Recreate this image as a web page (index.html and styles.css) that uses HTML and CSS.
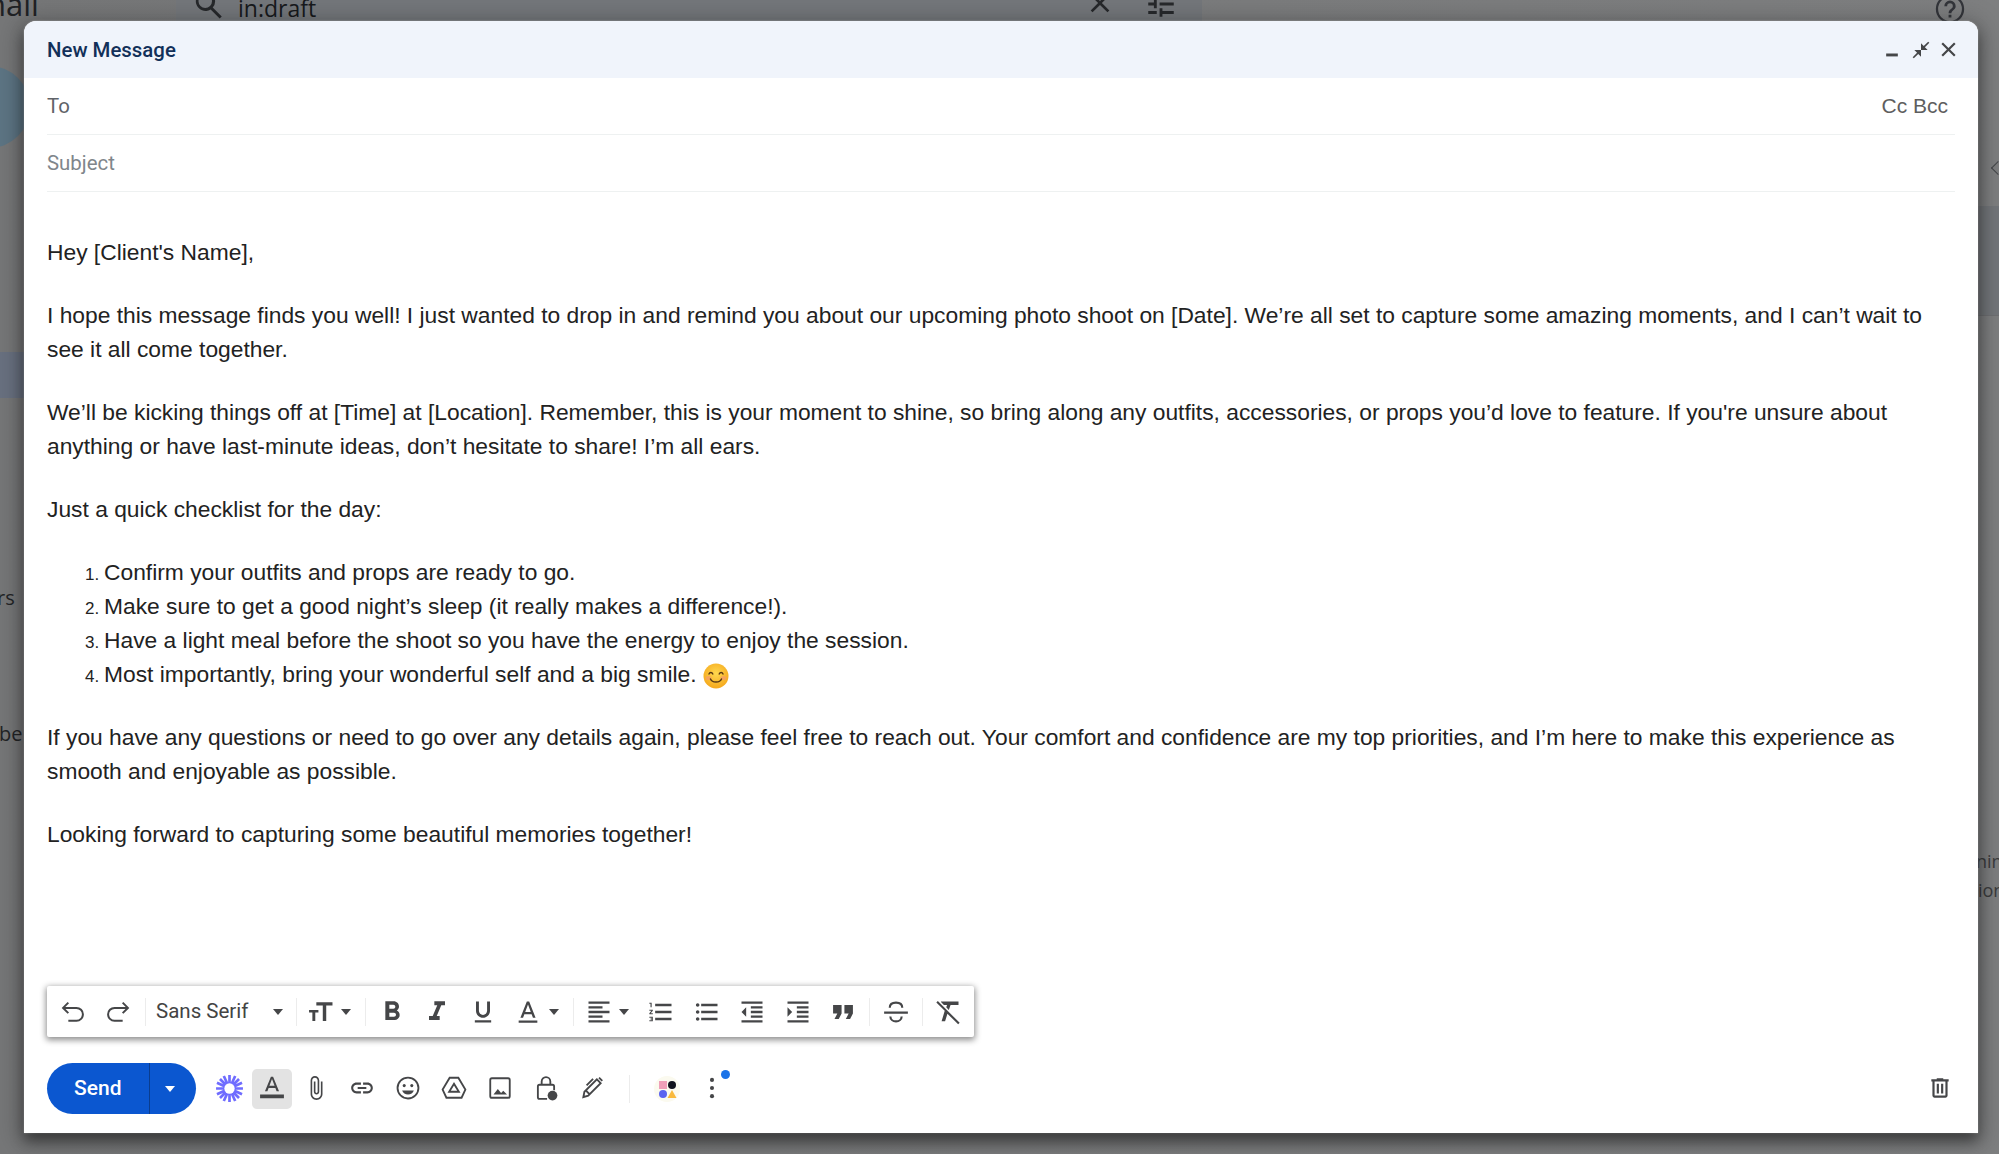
FILE: index.html
```html
<!DOCTYPE html>
<html lang="en">
<head>
<meta charset="utf-8">
<title>New Message</title>
<link rel="stylesheet" href="styles.css">
</head>
<body>
<div class="backdrop">
  <span class="bg-brand">nail</span>
  <div class="bg-search">
    <svg class="bg-search-icon" viewBox="0 0 24 24"><path d="M9.5 3a6.5 6.5 0 0 1 5 10.65l6 6-1.4 1.4-6-6A6.5 6.5 0 1 1 9.5 3zm0 2a4.5 4.5 0 1 0 0 9 4.5 4.5 0 0 0 0-9z"/></svg>
    <span class="bg-query">in:draft</span>
    <svg class="bg-x" viewBox="0 0 24 24"><path d="M19 6.41L17.59 5 12 10.59 6.41 5 5 6.41 10.59 12 5 17.59 6.41 19 12 13.41 17.59 19 19 17.59 13.41 12z"/></svg>
    <svg class="bg-tune" viewBox="0 0 24 24"><path d="M3 17v2h6v-2H3zM3 5v2h10V5H3zm10 16v-2h8v-2h-8v-2h-2v6h2zM7 9v2H3v2h4v2h2V9H7zm14 4v-2H11v2h10zm-6-4h2V7h4V5h-4V3h-2v6z"/></svg>
  </div>
  <svg class="bg-help" viewBox="0 0 24 24"><path d="M12 2a10 10 0 1 0 0 20 10 10 0 0 0 0-20zm0 18.4a8.4 8.4 0 1 1 0-16.8 8.4 8.4 0 0 1 0 16.8zM11 16h2v2h-2zm1-10a4 4 0 0 0-4 4h2a2 2 0 1 1 4 0c0 2-3 1.75-3 5h2c0-2.25 3-2.5 3-5a4 4 0 0 0-4-4z"/></svg>
  <div class="bg-compose"></div>
  <div class="bg-row-left"></div>
  <span class="bg-word bg-rs">rs</span>
  <span class="bg-word bg-be">be</span>
  <div class="bg-row-right"></div>
  <div class="bg-chevron"></div>
  <span class="bg-word bg-nin">nin</span>
  <span class="bg-word bg-ion">ion</span>
</div>

<main class="compose">
  <header class="compose-head">
    <h1 class="compose-title">New Message</h1>
    <div class="head-actions">
      <svg class="ico head-min" viewBox="0 0 24 24"><path d="M2 18h20v5H2z"/></svg>
      <svg class="ico head-full" viewBox="0 0 24 24"><path d="M22 3.41l-5.29 5.29L20 12h-8V4l3.29 3.29L20.59 2 22 3.41zM3.41 22l5.29-5.29L12 20v-8H4l3.29 3.29L2 20.59 3.41 22z"/></svg>
      <svg class="ico head-close" viewBox="0 0 24 24"><path d="M22 4.2L19.8 2 12 9.8 4.2 2 2 4.2 9.8 12 2 19.800 4.200 22 12 14.200 19.800 22 22 19.800 14.200 12z"/></svg>
    </div>
  </header>

  <div class="field">
    <span class="field-to">To</span>
    <span class="field-cc">Cc Bcc</span>
  </div>
  <div class="field">
    <span class="field-subject">Subject</span>
  </div>

  <article class="message">
    <p>Hey [Client's Name],</p>
    <p>I hope this message finds you well! I just wanted to drop in and remind you about our upcoming photo shoot on [Date]. We’re all set to capture some amazing moments, and I can’t wait to see it all come together.</p>
    <p>We’ll be kicking things off at [Time] at [Location]. Remember, this is your moment to shine, so bring along any outfits, accessories, or props you’d love to feature. If you're unsure about anything or have last-minute ideas, don’t hesitate to share! I’m all ears.</p>
    <p>Just a quick checklist for the day:</p>
    <ol class="checklist">
      <li>Confirm your outfits and props are ready to go.</li>
      <li>Make sure to get a good night’s sleep (it really makes a difference!).</li>
      <li>Have a light meal before the shoot so you have the energy to enjoy the session.</li>
      <li>Most importantly, bring your wonderful self and a big smile. <svg class="emoji" viewBox="0 0 26 26"><defs><radialGradient id="face" cx="50%" cy="40%" r="60%"><stop offset="0" stop-color="#ffd84f"/><stop offset="1" stop-color="#f5a81c"/></radialGradient></defs><circle cx="13" cy="13" r="12.500" fill="url(#face)"/><ellipse cx="5.500" cy="15" rx="3" ry="2" fill="#f59a6e" opacity=".7"/><ellipse cx="20.500" cy="15" rx="3" ry="2" fill="#f59a6e" opacity=".7"/><path d="M6 11c.7-2 3-2 3.800 0M16.200 11c.8-2 3.100-2 3.800 0" fill="none" stroke="#5a3a14" stroke-width="1.400" stroke-linecap="round"/><path d="M7.500 16c1.500 4 9.500 4 11 0" fill="none" stroke="#5a3a14" stroke-width="1.400" stroke-linecap="round"/></svg></li>
    </ol>
    <p>If you have any questions or need to go over any details again, please feel free to reach out. Your comfort and confidence are my top priorities, and I’m here to make this experience as smooth and enjoyable as possible.</p>
    <p>Looking forward to capturing some beautiful memories together!</p>
  </article>

  <div class="format-bar">
    <button class="tb"><svg class="ico ico-line" viewBox="0 0 24 24"><path d="M8 4L3.500 8.500 8 13M3.500 8.500H15a5.500 5.500 0 0 1 0 11H8"/></svg></button>
    <button class="tb"><svg class="ico ico-line" viewBox="0 0 24 24"><path d="M16 4l4.500 4.500L16 13M20.500 8.500H9a5.500 5.500 0 0 0 0 11h7"/></svg></button>
    <span class="sep sep-first"></span>
    <button class="tb-font"><span>Sans Serif</span><i class="caret"></i></button>
    <span class="sep"></span>
    <button class="tb-size"><svg class="ico" viewBox="0 0 24 24"><path d="M1 10.500h9v2.500H7v8H4.200v-8H1zM8 3h15.500v3.200h-6V21h-3.300V6.200H8z"/></svg><i class="caret"></i></button>
    <span class="sep"></span>
    <button class="tb tb-b"><svg class="ico ico-wide" viewBox="0 0 24 24"><path d="M15.600 10.790c.97-.67 1.650-1.770 1.650-2.790 0-2.260-1.750-4-4-4H7v14h7.040c2.090 0 3.710-1.700 3.710-3.790 0-1.520-.86-2.820-2.150-3.420zM10 6.500h3c.83 0 1.500.67 1.500 1.500s-.67 1.500-1.500 1.500h-3v-3zm3.500 9H10v-3h3.500c.83 0 1.500.67 1.500 1.500s-.67 1.500-1.500 1.500z"/></svg></button>
    <button class="tb"><svg class="ico ico-wide" viewBox="0 0 24 24"><path d="M10 4v3h2.210l-3.420 8H6v3h8v-3h-2.210l3.420-8H18V4z"/></svg></button>
    <button class="tb"><svg class="ico" viewBox="0 0 24 24"><path d="M12 17c3.310 0 6-2.690 6-6V3h-2.500v8c0 1.930-1.570 3.500-3.500 3.500S8.500 12.930 8.500 11V3H6v8c0 3.310 2.690 6 6 6zm-7 2v2h14v-2H5z"/></svg></button>
    <button class="tb-color"><svg class="ico" viewBox="0 0 24 24"><path d="M11 3L5.500 17h2.250l1.120-3h6.250l1.120 3h2.250L13 3h-2zm-1.380 9L12 5.670 14.380 12H9.620zM4 19.300h16v2H4z"/></svg><i class="caret"></i></button>
    <span class="sep sep-color"></span>
    <button class="tb-align"><svg class="ico" viewBox="0 0 24 24"><path d="M15 15H3v2h12v-2zm0-8H3v2h12V7zM3 13h18v-2H3v2zm0 8h18v-2H3v2zM3 3v2h18V3H3z"/></svg><i class="caret"></i></button>
    <button class="tb"><svg class="ico" viewBox="0 0 24 24"><path d="M2 17h2v.5H3v1h1v.5H2v1h3v-4H2v1zm1-9h1V4H2v1h1v3zm-1 3h1.800L2 13.100v.9h3v-1H3.200L5 10.900V10H2v1zm5-6v2h14V5H7zm0 14h14v-2H7v2zm0-6h14v-2H7v2z"/></svg></button>
    <button class="tb"><svg class="ico" viewBox="0 0 24 24"><path d="M4 10.500c-.83 0-1.500.67-1.500 1.500s.67 1.500 1.500 1.500 1.500-.67 1.500-1.500-.67-1.500-1.500-1.500zm0-6c-.83 0-1.500.67-1.500 1.500S3.170 7.500 4 7.500 5.500 6.830 5.500 6 4.830 4.500 4 4.500zm0 12c-.83 0-1.500.68-1.500 1.500s.68 1.500 1.500 1.500 1.500-.68 1.500-1.500-.67-1.500-1.500-1.500zM7 19h14v-2H7v2zm0-6h14v-2H7v2zm0-8v2h14V5H7z"/></svg></button>
    <button class="tb"><svg class="ico" viewBox="0 0 24 24"><path d="M11 17h10v-2H11v2zm-8-5l4 4V8l-4 4zm0 9h18v-2H3v2zM3 3v2h18V3H3zm8 6h10V7H11v2zm0 4h10v-2H11v2z"/></svg></button>
    <button class="tb"><svg class="ico" viewBox="0 0 24 24"><path d="M3 21h18v-2H3v2zM3 8v8l4-4-4-4zm8 9h10v-2H11v2zM3 3v2h18V3H3zm8 6h10V7H11v2zm0 4h10v-2H11v2z"/></svg></button>
    <button class="tb"><svg class="ico ico-quote" viewBox="0 0 24 24"><path d="M6 17h3l2-4V7H5v6h3zm8 0h3l2-4V7h-6v6h3z"/></svg></button>
    <span class="sep sep-quote"></span>
    <button class="tb-strike"><svg class="ico ico-line" viewBox="0 0 24 24"><path d="M17 8.500C17 6 15 4.500 12 4.500S7 6 7 8.500M2.500 12.500h19M7.500 15.500c0 2.500 2 4 4.500 4s4.500-1.500 4.500-4"/></svg></button>
    <span class="sep"></span>
    <button class="tb-clear"><svg class="ico" viewBox="0 0 24 24"><path d="M3.270 2.500L2 3.770l7.200 7.200L6.500 20h3l2-6.600L20.700 22.600 22 21.300 3.270 2.500zM6 3v.5L8.500 6h2.700l-.7 2 2.200 2.200L14.200 6H21V3H6z"/></svg></button>
  </div>

  <footer class="actions">
    <div class="send">
      <span class="send-label">Send</span>
      <span class="send-more"><i class="caret caret-white"></i></span>
    </div>
    <button class="ab ab-spark"><svg class="ico-spark" viewBox="0 0 28 28"><path d="M14 1v26M1 14h26M4.800 4.800l18.400 18.400M23.200 4.800L4.800 23.200M8.500 1.900l11 24.200M19.500 1.900l-11 24.200M1.900 8.500l24.200 11M26.100 8.500L1.900 19.500"/><circle cx="14" cy="14" r="5" class="spark-hole"/></svg></button>
    <button class="ab ab-active"><svg class="ico" viewBox="0 0 24 24"><path d="M11 1.500L5.500 15h2.250l1.120-3h6.250l1.120 3h2.250L13 1.500h-2zM9.620 10L12 3.700 14.380 10H9.620zM1 18h22v3.500H1z"/></svg></button>
    <button class="ab"><svg class="ico" viewBox="0 0 24 24"><path d="M16.500 6v11.500c0 2.210-1.790 4-4 4s-4-1.790-4-4V5c0-1.380 1.120-2.500 2.500-2.500s2.500 1.120 2.500 2.500v10.500c0 .55-.45 1-1 1s-1-.45-1-1V6H10v9.500c0 1.380 1.120 2.500 2.500 2.500s2.500-1.120 2.500-2.500V5c0-2.210-1.790-4-4-4S7 2.790 7 5v12.500c0 3.040 2.460 5.500 5.500 5.500s5.500-2.460 5.500-5.500V6h-1.500z"/></svg></button>
    <button class="ab"><svg class="ico" viewBox="0 0 24 24"><path d="M3.900 12c0-1.710 1.390-3.100 3.100-3.100h4V7H7c-2.760 0-5 2.240-5 5s2.240 5 5 5h4v-1.900H7c-1.710 0-3.100-1.390-3.100-3.100zM8 13h8v-2H8v2zm9-6h-4v1.900h4c1.710 0 3.100 1.390 3.100 3.100s-1.390 3.100-3.100 3.100h-4V17h4c2.760 0 5-2.240 5-5s-2.240-5-5-5z"/></svg></button>
    <button class="ab"><svg class="ico" viewBox="0 0 24 24"><path d="M12 1.500a10.500 10.500 0 1 0 0 21 10.500 10.500 0 0 0 0-21zm0 19.300a8.800 8.800 0 1 1 0-17.600 8.800 8.800 0 0 1 0 17.600z"/><circle cx="8.500" cy="9.800" r="1.400"/><circle cx="15.500" cy="9.800" r="1.400"/><path d="M12 18c2.500 0 4.600-1.600 5.400-3.800H6.600C7.400 16.400 9.500 18 12 18z"/></svg></button>
    <button class="ab"><svg class="ico ico-line" viewBox="0 0 24 24"><path d="M8 2.500h8l6.500 11-3.500 7.500H5L1.500 13.500zM12 8l4.500 7.500h-9z"/></svg></button>
    <button class="ab"><svg class="ico ico-line" viewBox="0 0 24 24"><rect x="3" y="3" width="18" height="18" rx="1.500"/><path class="ico-fill" d="M6 18l4-5 3 3.500 2-2 3.500 3.500z"/></svg></button>
    <button class="ab"><svg class="ico ico-line" viewBox="0 0 24 24"><path d="M8 9V6a4 4 0 0 1 8 0v3M13 22H6a1.500 1.500 0 0 1-1.500-1.500v-10A1.500 1.500 0 0 1 6 9h12a1.500 1.500 0 0 1 1.500 1.500V14"/><circle class="ico-fill" cx="18" cy="19" r="4.500"/></svg></button>
    <button class="ab"><svg class="ico ico-line" viewBox="0 0 24 24"><path d="M4 20.500l1-5L16.500 4l3.500 3.500L8.500 19zM6 14l4 4M13 3.500l-6 6M18.500 2.500l3 3"/></svg></button>
    <span class="sep sep-actions"></span>
    <button class="ab ab-app"><svg class="ico-app" viewBox="0 0 26 26"><circle cx="13" cy="13" r="13" fill="#fbfaef"/><rect x="5" y="5" width="8" height="8" fill="#ef9fb8"/><circle cx="18" cy="9" r="4" fill="#11131c"/><circle cx="9" cy="18" r="4" fill="#5b63f0"/><path d="M18 14l4.500 8h-9z" fill="#f9b93c"/></svg></button>
    <button class="ab ab-more"><svg class="ico" viewBox="0 0 24 24"><circle cx="12" cy="4.500" r="1.900"/><circle cx="12" cy="12" r="1.900"/><circle cx="12" cy="19.500" r="1.900"/></svg><i class="badge"></i></button>
    <button class="ab ab-trash"><svg class="ico" viewBox="0 0 24 24"><path d="M15 4V3H9v1H4v2h1v13c0 1.100.9 2 2 2h10c1.100 0 2-.9 2-2V6h1V4h-5zm2 15H7V6h10v13zM9 8h2v9H9zm4 0h2v9h-2z"/></svg></button>
  </footer>
</main>
</body>
</html>
```
FILE: styles.css
```css
* { box-sizing: border-box; }
html, body { margin: 0; height: 100%; overflow: hidden; }
body { background: #7b7c7d; font-family: "Liberation Sans", Arial, sans-serif; color: #222; }

/* dimmed page behind the dialog */
.backdrop { position: absolute; inset: 0; overflow: hidden; background: linear-gradient(90deg, #767778, #7e7f80); color: #1e1f21; }
.bg-brand { position: absolute; left: -13px; top: -18px; font: 400 31px/44px "Open Sans", sans-serif; color: #202124; }
.bg-search { position: absolute; left: 176px; top: 0; width: 1026px; height: 24px; background: #74777b; }
.bg-search svg { position: absolute; fill: #26282b; }
.bg-search-icon { left: 15px; top: -13px; width: 36px; height: 36px; }
.bg-query { position: absolute; left: 62px; top: -14px; font: 400 23px/44px "Open Sans", sans-serif; color: #17191c; }
.bg-x { left: 908px; top: -13px; width: 32px; height: 32px; }
.bg-tune { left: 968px; top: -13px; width: 34px; height: 34px; }
.bg-help { position: absolute; left: 1933px; top: -8px; width: 34px; height: 34px; fill: #33353a; }
.bg-compose { position: absolute; left: -60px; top: 66px; width: 90px; height: 82px; border-radius: 41px; background: #5d7584; }
.bg-row-left { position: absolute; left: 0; top: 352px; width: 30px; height: 46px; background: #697180; }
.bg-row-right { position: absolute; left: 1978px; top: 206px; width: 21px; height: 110px; background: #73767a; border-bottom: 1px solid #6f7073; }
.bg-chevron { position: absolute; left: 1993px; top: 163px; width: 10px; height: 10px; border-left: 1.500px solid #45474a; border-bottom: 1.500px solid #45474a; transform: rotate(45deg); }
.bg-word { position: absolute; font: 400 20px/24px "Open Sans", sans-serif; color: #232426; }
.bg-rs { left: -3px; top: 586px; }
.bg-be { left: -1px; top: 722px; }
.bg-nin { left: 1976px; top: 849px; color: #3b3c3e; font-size: 18px; }
.bg-ion { left: 1978px; top: 878px; color: #3b3c3e; font-size: 18px; }

/* dialog */
.compose { position: absolute; left: 24px; top: 21px; width: 1954px; height: 1112px; display: flex; flex-direction: column; background: #fff; border-radius: 12px 12px 0 0; box-shadow: 0 8px 14px rgba(0,0,0,.42), 0 4px 24px 6px rgba(0,0,0,.22), 0 0 2px rgba(255,255,255,.6); }
.compose-head { flex: none; height: 57px; display: flex; align-items: center; justify-content: space-between; padding: 0 21px 0 23px; background: #f0f4fb; border-radius: 12px 12px 0 0; }
.compose-title { margin: 0; font: 500 20.400px/28px Roboto, sans-serif; color: #123059; }
.head-actions { display: flex; align-items: center; }
.ico { display: block; width: 24px; height: 24px; fill: #454648; }
.ico-line { fill: none; stroke: #454648; stroke-width: 1.700px; }
.ico-fill { fill: #454648; stroke: none; }
.head-min { width: 14px; height: 14px; margin-right: 11.500px; }
.head-full { width: 20px; height: 20px; margin-right: 9.500px; }
.head-close { width: 17px; height: 17px; }

.field { flex: none; height: 57px; margin: 0 23px; display: flex; align-items: center; justify-content: space-between; border-bottom: 1.500px solid #eef1f1; font-size: 21px; }
.field-to { font: 400 20.400px/28px Roboto, sans-serif; color: #5f6368; }
.field-subject { font: 400 20.400px/28px Roboto, sans-serif; color: #80868b; }
.field-cc { margin-right: 7px; color: #5e5e5e; }

.message { flex: 1; min-height: 0; padding: 43px 23px 0; font-size: 22.800px; line-height: 34px; color: #222; }
.message p { margin: 0 0 29px; }
.checklist { margin: 0 0 29px; padding-left: 57px; }
.checklist li::marker { font-size: 17px; }
.emoji { display: inline-block; width: 26px; height: 26px; vertical-align: -7px; }

/* formatting bar */
.format-bar { flex: none; align-self: flex-start; width: 927px; height: 51px; margin: 0 0 26px 23px; padding-left: 3px; display: flex; align-items: center; background: #fff; border-radius: 2px; box-shadow: 0 2px 6px 1px rgba(0,0,0,.45); }
.format-bar button { height: 100%; padding: 0; border: 0; background: none; display: flex; align-items: center; font: 400 20.500px/1 Roboto, sans-serif; color: #444; }
.format-bar .ico { flex: none; width: 28px; height: 28px; }
.format-bar .ico-wide { width: 32px; height: 32px; }
.format-bar .ico-quote { width: 34px; height: 34px; }
.format-bar .tb-size .ico { width: 25px; height: 25px; }
.format-bar .tb-strike .ico { width: 30px; height: 30px; }
.tb { flex: none; width: 45.500px; justify-content: center; }
.sep { flex: none; width: 1px; height: 28px; background: #ececec; }
.sep-first { margin-left: 4px; }
.tb-font { flex: none; width: 150px; padding-left: 10px !important; justify-content: space-between; padding-right: 13px !important; }
.tb-size { flex: none; width: 68px; padding-left: 11px !important; }
.tb-size .caret { margin-left: 8px; }
.tb-b { margin-left: 3px; }
.tb-color { flex: none; width: 64px; padding-left: 8.500px !important; }
.tb-color .caret, .tb-align .caret { margin-left: 6.500px; }
.tb-align { flex: none; width: 65px; padding-left: 11px !important; }
.sep-color { margin-left: 3px; }
.sep-quote { margin-left: 3px; }
.tb-strike { flex: none; width: 52px; justify-content: center; }
.tb-clear { flex: none; width: 50px; justify-content: center; }
.caret { display: inline-block; flex: none; width: 0; height: 0; border-left: 5.500px solid transparent; border-right: 5.500px solid transparent; border-top: 6px solid #454648; }
.caret-white { border-top-color: #fff; }

/* bottom action row */
.actions { flex: none; height: 51px; margin: 0 23px 19px; display: flex; align-items: center; }
.send { flex: none; width: 149px; height: 51px; display: flex; align-items: center; background: #0b57d0; border-radius: 26px; color: #fff; font: 500 21px/1 Roboto, sans-serif; }
.send-label { width: 103px; height: 100%; display: flex; align-items: center; padding-left: 27px; border-right: 1px solid #0a3d8f; }
.send-more { flex: 1; display: flex; justify-content: center; padding-right: 6px; }
.ab { flex: none; width: 46px; height: 40px; padding: 0; border: 0; background: none; display: flex; align-items: center; justify-content: center; }
.ab .ico { flex: none; width: 26px; height: 26px; margin-bottom: 1px; }
.ab-spark { width: 33px; margin-left: 17px; margin-right: 6px; }
.ico-spark { width: 29px; height: 29px; fill: none; stroke: #6f6cff; stroke-width: 2.600px; }
.spark-hole { fill: #fff; stroke: none; }
.ab-active { width: 40px; background: #e3e3e3; border-radius: 5px; margin-right: 1px; }
.sep-actions { height: 28px; margin-left: 14px; margin-right: 24px; }
.ab-app { width: 26px; margin-right: 20px; }
.ico-app { width: 26px; height: 26px; }
.ab-more { position: relative; width: 24px; }
.badge { position: absolute; left: 20.500px; top: 1.500px; width: 9px; height: 9px; border-radius: 50%; background: #1a73e8; }
.ab-trash { margin-left: auto; margin-right: -5px; width: 40px; }
```
